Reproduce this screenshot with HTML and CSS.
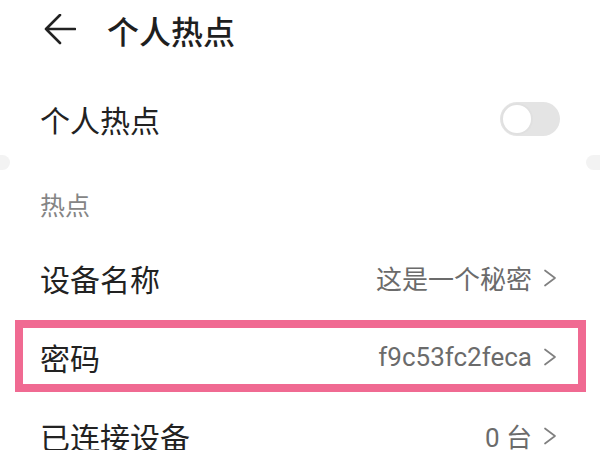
FILE: index.html
```html
<!DOCTYPE html>
<html lang="zh-CN">
<head>
<meta charset="utf-8">
<link rel="stylesheet" href="styles.css">
</head>
<body>
<div class="page">
  <header class="topbar">
    <svg class="back" width="32" height="32" viewBox="0 0 32 32">
      <path d="M2 15 H31 M16 1 L2 15 L16 29" fill="none" stroke="#222" stroke-width="2.6" stroke-linecap="round" stroke-linejoin="round"/>
    </svg>
    <h1 class="title">个人热点</h1>
  </header>

  <section class="card first">
    <div class="row">
      <span class="label">个人热点</span>
      <span class="switch"><span class="knob"></span></span>
    </div>
  </section>

  <div class="gap"><span class="nub left"></span><span class="nub right"></span></div>

  <section class="card">
    <div class="section-title">热点</div>
    <div class="row item">
      <span class="label">设备名称</span>
      <span class="value">这是一个秘密<svg class="chev" width="14" height="18" viewBox="0 0 14 18"><path d="M2 1.5 L12 9 L2 16.5" fill="none" stroke="#808080" stroke-width="1.7" stroke-linecap="round" stroke-linejoin="round"/></svg></span>
    </div>
    <div class="row item highlighted">
      <span class="label">密码</span>
      <span class="value latin">f9c53fc2feca<svg class="chev" width="14" height="18" viewBox="0 0 14 18"><path d="M2 1.5 L12 9 L2 16.5" fill="none" stroke="#808080" stroke-width="1.7" stroke-linecap="round" stroke-linejoin="round"/></svg></span>
      <span class="mark"></span>
    </div>
    <div class="row item">
      <span class="label">已连接设备</span>
      <span class="value">0 台<svg class="chev" width="14" height="18" viewBox="0 0 14 18"><path d="M2 1.5 L12 9 L2 16.5" fill="none" stroke="#808080" stroke-width="1.7" stroke-linecap="round" stroke-linejoin="round"/></svg></span>
    </div>
  </section>
</div>
</body>
</html>
```

FILE: styles.css
```css
html, body {
  margin: 0;
  padding: 0;
  background: #ffffff;
}
body {
  font-family: "Roboto", "Noto Sans CJK SC", sans-serif;
  color: #222222;
  overflow: hidden;
}
.page {
  width: 600px;
  height: 450px;
  overflow: hidden;
}
.topbar {
  height: 60px;
  display: flex;
  align-items: center;
  padding-left: 44px;
}
.back {
  display: block;
}
.title {
  margin: 0 0 0 31px;
  font-family: "Noto Sans CJK SC", sans-serif;
  font-size: 32px;
  font-weight: 500;
  line-height: 1;
  color: #1f1f1f;
}
.card {
  background: #ffffff;
}
.card.first {
  padding-top: 23px;
}
.row {
  display: flex;
  align-items: center;
  justify-content: space-between;
  height: 70px;
  padding: 0 40px;
}
.card.first .row {
  height: 72px;
}
.row.item {
  height: 79px;
  padding-right: 43px;
}
.label {
  font-family: "Noto Sans CJK SC", sans-serif;
  font-size: 30px;
  color: #222222;
}
.value {
  display: flex;
  align-items: center;
  font-family: "Roboto", "Noto Sans CJK SC", sans-serif;
  font-size: 26px;
  color: #6b6b6b;
}
.value.latin {
  font-size: 26px;
}
.chev {
  display: block;
  margin-left: 11px;
}
.switch {
  position: relative;
  width: 60px;
  height: 34px;
  border-radius: 17px;
  background: #e4e4e4;
}
.knob {
  position: absolute;
  left: 1px;
  top: 1px;
  width: 28px;
  height: 28px;
  border-radius: 50%;
  background: #ffffff;
  border: 2px solid #e0e0e0;
}
.gap {
  height: 15px;
  display: flex;
  justify-content: space-between;
}
.nub {
  display: block;
  height: 15px;
  background: #f3f3f3;
}
.nub.left {
  width: 10px;
  border-radius: 0 8px 8px 0;
}
.nub.right {
  width: 14px;
  border-radius: 8px 0 0 8px;
}
.section-title {
  height: 68px;
  display: flex;
  align-items: center;
  padding-left: 40px;
  font-family: "Noto Sans CJK SC", sans-serif;
  font-size: 25px;
  color: #858585;
}
.highlighted {
  position: relative;
}
.mark {
  position: absolute;
  left: 15px;
  top: 3px;
  width: 555px;
  height: 56px;
  border: 8px solid #f06a92;
}
```
